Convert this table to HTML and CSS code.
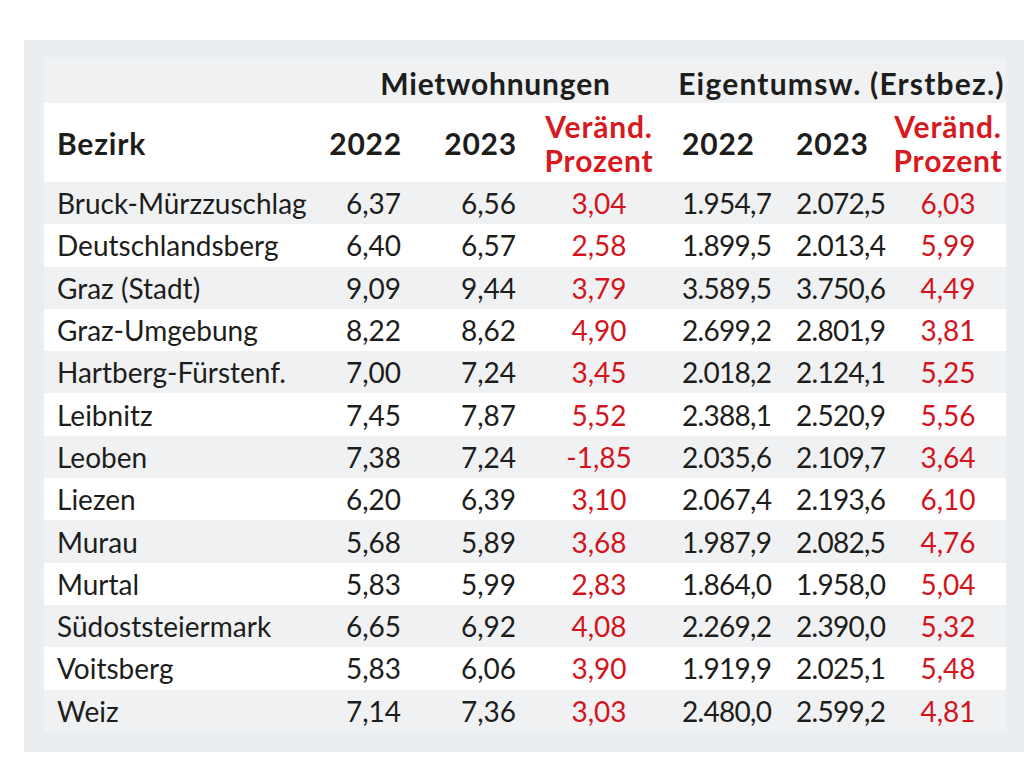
FILE: index.html
```html
<!DOCTYPE html>
<html lang="de">
<head>
<meta charset="utf-8">
<title>Mietpreise Steiermark</title>
<link rel="stylesheet" href="styles.css">
</head>
<body>
<div class="panel">
  <div class="table">
    <div class="row group">
      <div class="c-name"></div>
      <div class="grp grp-miet">Mietwohnungen</div>
      <div class="grp grp-eig">Eigentumsw. (Erstbez.)</div>
    </div>
    <div class="row head">
      <div class="c-name">Bezirk</div>
      <div class="c-m1">2022</div>
      <div class="c-m2">2023</div>
      <div class="c-mp red">Veränd.<br>Prozent</div>
      <div class="c-e1">2022</div>
      <div class="c-e2">2023</div>
      <div class="c-ep red">Veränd.<br>Prozent</div>
    </div>
    <div class="row data alt"><div class="c-name">Bruck-Mürzzuschlag</div><div class="c-m1">6,37</div><div class="c-m2">6,56</div><div class="c-mp red">3,04</div><div class="c-e1">1.954,7</div><div class="c-e2">2.072,5</div><div class="c-ep red">6,03</div></div>
    <div class="row data"><div class="c-name">Deutschlandsberg</div><div class="c-m1">6,40</div><div class="c-m2">6,57</div><div class="c-mp red">2,58</div><div class="c-e1">1.899,5</div><div class="c-e2">2.013,4</div><div class="c-ep red">5,99</div></div>
    <div class="row data alt"><div class="c-name">Graz (Stadt)</div><div class="c-m1">9,09</div><div class="c-m2">9,44</div><div class="c-mp red">3,79</div><div class="c-e1">3.589,5</div><div class="c-e2">3.750,6</div><div class="c-ep red">4,49</div></div>
    <div class="row data"><div class="c-name">Graz-Umgebung</div><div class="c-m1">8,22</div><div class="c-m2">8,62</div><div class="c-mp red">4,90</div><div class="c-e1">2.699,2</div><div class="c-e2">2.801,9</div><div class="c-ep red">3,81</div></div>
    <div class="row data alt"><div class="c-name">Hartberg-Fürstenf.</div><div class="c-m1">7,00</div><div class="c-m2">7,24</div><div class="c-mp red">3,45</div><div class="c-e1">2.018,2</div><div class="c-e2">2.124,1</div><div class="c-ep red">5,25</div></div>
    <div class="row data"><div class="c-name">Leibnitz</div><div class="c-m1">7,45</div><div class="c-m2">7,87</div><div class="c-mp red">5,52</div><div class="c-e1">2.388,1</div><div class="c-e2">2.520,9</div><div class="c-ep red">5,56</div></div>
    <div class="row data alt"><div class="c-name">Leoben</div><div class="c-m1">7,38</div><div class="c-m2">7,24</div><div class="c-mp red">-1,85</div><div class="c-e1">2.035,6</div><div class="c-e2">2.109,7</div><div class="c-ep red">3,64</div></div>
    <div class="row data"><div class="c-name">Liezen</div><div class="c-m1">6,20</div><div class="c-m2">6,39</div><div class="c-mp red">3,10</div><div class="c-e1">2.067,4</div><div class="c-e2">2.193,6</div><div class="c-ep red">6,10</div></div>
    <div class="row data alt"><div class="c-name">Murau</div><div class="c-m1">5,68</div><div class="c-m2">5,89</div><div class="c-mp red">3,68</div><div class="c-e1">1.987,9</div><div class="c-e2">2.082,5</div><div class="c-ep red">4,76</div></div>
    <div class="row data"><div class="c-name">Murtal</div><div class="c-m1">5,83</div><div class="c-m2">5,99</div><div class="c-mp red">2,83</div><div class="c-e1">1.864,0</div><div class="c-e2">1.958,0</div><div class="c-ep red">5,04</div></div>
    <div class="row data alt"><div class="c-name">Südoststeiermark</div><div class="c-m1">6,65</div><div class="c-m2">6,92</div><div class="c-mp red">4,08</div><div class="c-e1">2.269,2</div><div class="c-e2">2.390,0</div><div class="c-ep red">5,32</div></div>
    <div class="row data"><div class="c-name">Voitsberg</div><div class="c-m1">5,83</div><div class="c-m2">6,06</div><div class="c-mp red">3,90</div><div class="c-e1">1.919,9</div><div class="c-e2">2.025,1</div><div class="c-ep red">5,48</div></div>
    <div class="row data alt"><div class="c-name">Weiz</div><div class="c-m1">7,14</div><div class="c-m2">7,36</div><div class="c-mp red">3,03</div><div class="c-e1">2.480,0</div><div class="c-e2">2.599,2</div><div class="c-ep red">4,81</div></div>
  </div>
</div>
</body>
</html>
```
FILE: styles.css
```css
html, body {
  margin: 0;
  padding: 0;
  background: #ffffff;
}
body {
  padding: 40px 0 0 24px;
  font-family: Lato, "Noto Sans", sans-serif;
  color: #1d1d1b;
}
.panel {
  background: #ebeef0;
  width: 1000px;
  height: 712px;
  box-sizing: border-box;
  padding: 18px 18px 20px 20px;
}
.table {
  width: 962px;
  background: #eff1f3;
}
.row {
  display: grid;
  grid-template-columns: 274px 92px 115px 148px 117px 100px 116px;
  align-items: center;
}
.group {
  height: 45px;
  font-weight: 700;
  font-size: 30px;
  letter-spacing: 0.8px;
  grid-template-columns: 274px 355px 333px;
}
.grp {
  text-align: center;
  line-height: 34px;
  padding-top: 4px;
}
.grp-eig {
  padding-left: 4px;
  letter-spacing: 1.2px;
}
.head {
  height: 79px;
  background: #ffffff;
  font-weight: 700;
  font-size: 30px;
  letter-spacing: 0.8px;
  line-height: 34px;
}
.head .c-m1, .head .c-m2 {
  padding-right: 8px;
}
.data {
  height: 42.3px;
  background: #ffffff;
  font-size: 28px;
  line-height: 34px;
}
.data.alt {
  background: #eff1f3;
}
.c-name {
  padding-left: 13px;
  white-space: nowrap;
}
.c-m1, .c-m2 {
  text-align: right;
  padding-right: 9px;
}
.c-mp, .c-ep {
  text-align: center;
}
.c-e1 {
  padding-left: 9px;
}
.c-e2 {
  padding-left: 6px;
}
.data .c-e1, .data .c-e2 {
  letter-spacing: -0.7px;
}
.red {
  color: #d3141d;
}
.head .red {
  color: #d71920;
}
```
